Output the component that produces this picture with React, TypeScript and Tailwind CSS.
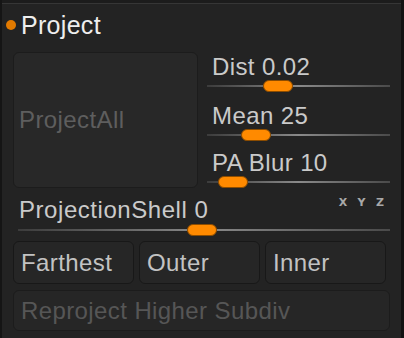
import React from 'react';

const font = "font-['Liberation_Sans',Arial,sans-serif]";

const Thumb = ({ left }: { left: number }) => (
  <div
    className="absolute top-1/2 -translate-y-1/2 w-[30px] h-[12px] rounded-full bg-[#ff8a00] border border-[#8c4c00]"
    style={{ left }}
  />
);

const Track = ({ width, thumb, className = '' }: { width: number; thumb: number; className?: string }) => (
  <div className={`relative h-[12px] flex items-center ${className}`} style={{ width }}>
    <div className="w-full h-[2px] bg-gradient-to-r from-[#3c3c3c] via-[#8a8a8a] to-[#4a4a4a]" />
    <Thumb left={thumb} />
  </div>
);

const Slider = ({ label, thumb, mt }: { label: string; thumb: number; mt: string }) => (
  <div className={mt}>
    <div className="pl-[5px] h-[24px] leading-[24px] text-[24px] tracking-[0.4px] text-[#cacaca]">{label}</div>
    <Track width={183} thumb={thumb} className="mt-[1px]" />
  </div>
);

const Btn = ({ label }: { label: string }) => (
  <div className="w-[121px] h-[43px] flex items-center pl-[7px] rounded-[6px] bg-[#262626] border border-[#181818] text-[24px] leading-[24px] tracking-[0.4px] text-[#c2c2c2]">
    {label}
  </div>
);

export default function App() {
  return (
    <div className={`w-[404px] h-[338px] flex bg-[#232323] overflow-hidden ${font}`}>
      <div className="w-[2px] h-full bg-[#151515]" />
      <div className="flex-1 flex flex-col">
        <div className="h-[3px] bg-[#1c1c1c]" />
        <div className="h-px bg-[#363636]" />

        {/* header */}
        <div className="mt-[9px] flex items-center h-[24px] pl-[4px]">
          <div className="w-[10px] h-[10px] rounded-full bg-[#e27a00]" />
          <div className="ml-[5px] text-[25px] leading-[24px] tracking-[0.3px] text-[#eeeeee]">Project</div>
        </div>

        {/* main */}
        <div className="mt-[15px] flex">
          <div className="ml-[11px] w-[185px] h-[136px] rounded-[6px] bg-[#282828] border border-[#1c1c1c] flex items-center pl-[5px] text-[24px] leading-[24px] tracking-[0.4px] text-[#5e5e5e]">
            ProjectAll
          </div>
          <div className="ml-[9px] w-[183px] flex flex-col">
            <Slider label="Dist 0.02" thumb={56} mt="mt-[3px]" />
            <Slider label="Mean 25" thumb={34} mt="mt-[12px]" />
            <Slider label="PA Blur 10" thumb={11} mt="mt-[10px]" />
          </div>
        </div>

        {/* projection shell */}
        <div className="mt-[10px] flex justify-between items-start">
          <div className="ml-[17px] h-[24px] text-[24px] leading-[24px] tracking-[0.55px] text-[#cacaca]">ProjectionShell 0</div>
          <div className="mr-[16px] mt-[-1px] flex gap-[9px] text-[11px] font-bold leading-[11px] text-[#a8a8a8] font-['DejaVu_Sans',sans-serif]">
            <span className="w-[10px] text-center">X</span>
            <span className="w-[9px] text-center">Y</span>
            <span className="w-[10px] text-center">Z</span>
          </div>
        </div>
        <Track width={372} thumb={169} className="ml-[16px] mt-[2px]" />

        {/* buttons */}
        <div className="mt-[5px] ml-[11px] flex gap-[5px]">
          <Btn label="Farthest" />
          <Btn label="Outer" />
          <Btn label="Inner" />
        </div>
        <div className="mt-[6px] ml-[11px] w-[377px] h-[41px] flex items-center pl-[7px] rounded-[6px] bg-[#262626] border border-[#1c1c1c] text-[24px] leading-[24px] tracking-[0.4px] text-[#565656]">
          Reproject Higher Subdiv
        </div>
      </div>
      <div className="w-[3px] h-full bg-[#121212]" />
    </div>
  );
}
